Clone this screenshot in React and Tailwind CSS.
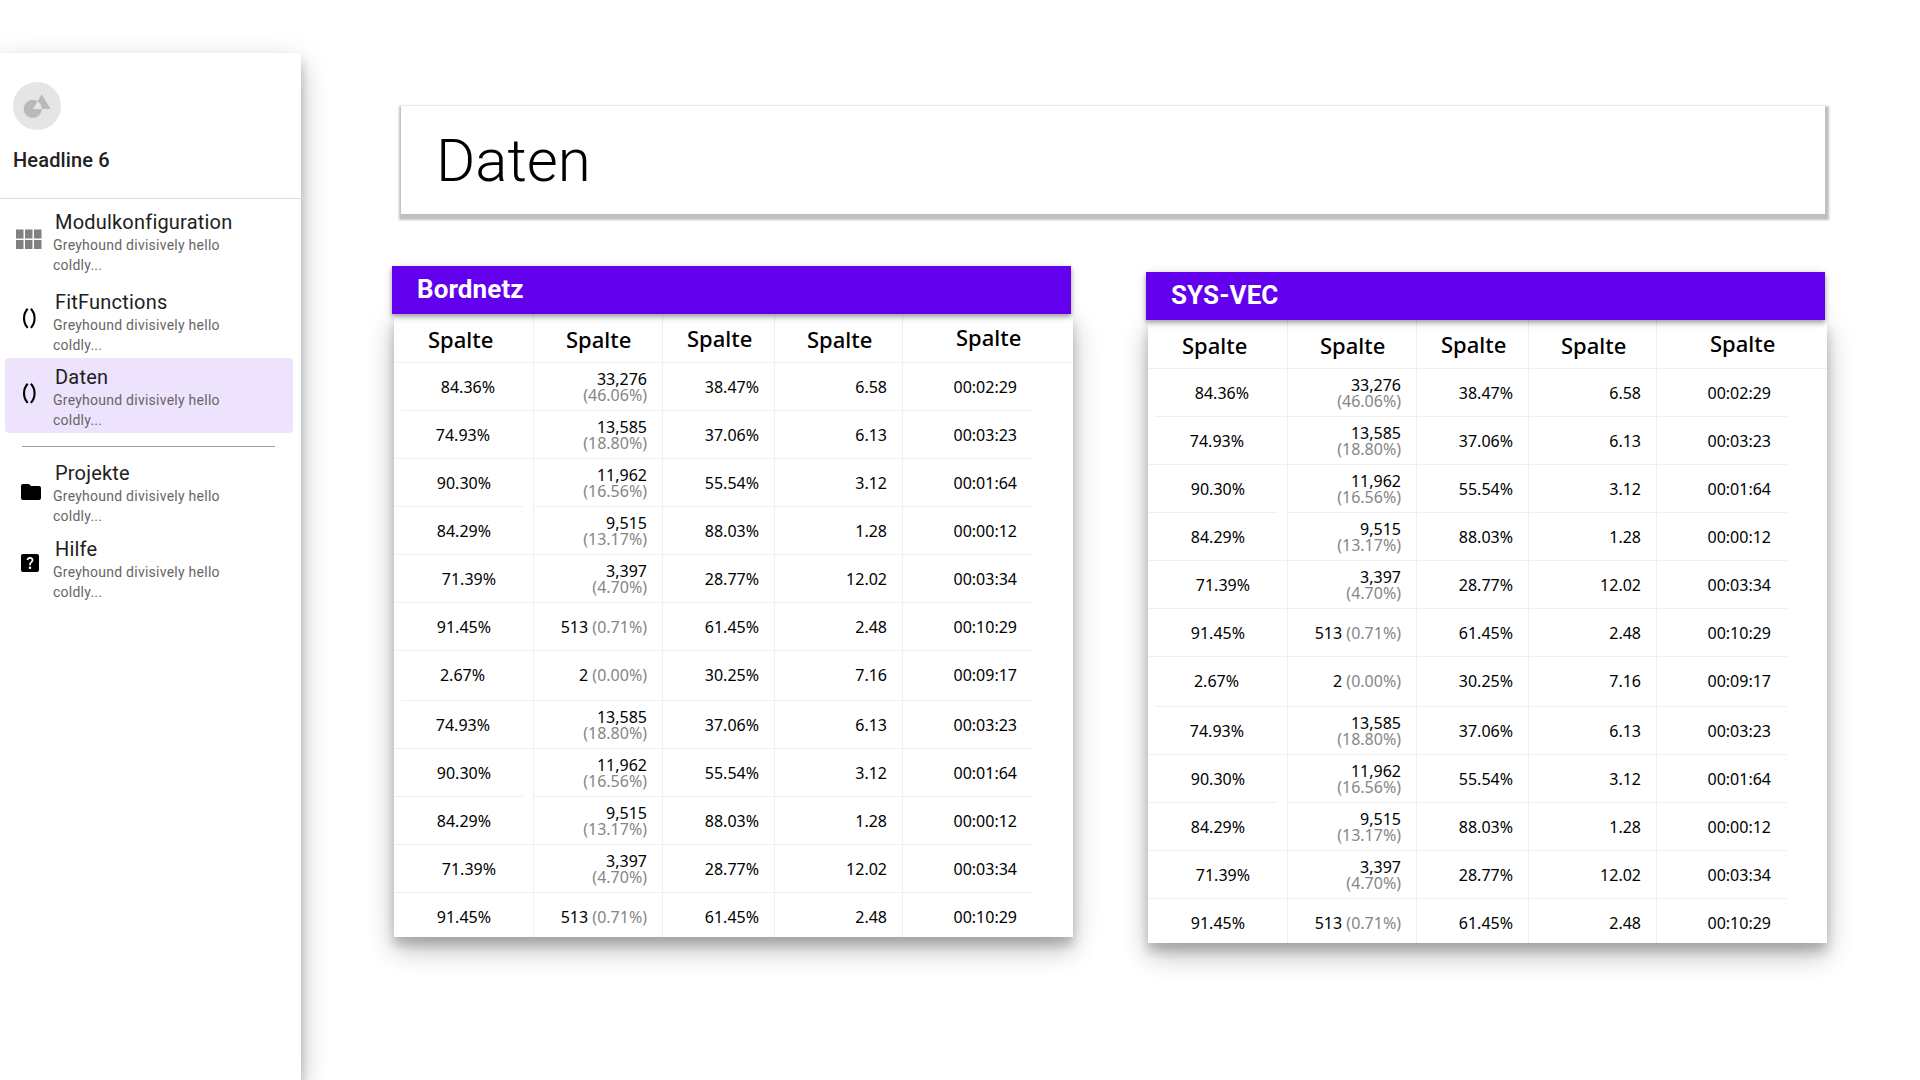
import React from "react";
import { MdFolder, MdHelpCenter } from "react-icons/md";

const ROWS = [
  ["84.36%", "33,276", "(46.06%)", "38.47%", "6.58", "00:02:29", "pr-[38px]"],
  ["74.93%", "13,585", "(18.80%)", "37.06%", "6.13", "00:03:23", "pr-[43px]"],
  ["90.30%", "11,962", "(16.56%)", "55.54%", "3.12", "00:01:64", "pr-[32px]"],
  ["84.29%", "9,515", "(13.17%)", "88.03%", "1.28", "00:00:12", "pr-[42px]"],
  ["71.39%", "3,397", "(4.70%)", "28.77%", "12.02", "00:03:34", "pr-[37px]"],
  ["91.45%", "513", "(0.71%)", "61.45%", "2.48", "00:10:29", "pr-[42px]"],
  ["2.67%", "2", "(0.00%)", "30.25%", "7.16", "00:09:17", "pr-[48px]"],
  ["74.93%", "13,585", "(18.80%)", "37.06%", "6.13", "00:03:23", "pr-[43px]"],
  ["90.30%", "11,962", "(16.56%)", "55.54%", "3.12", "00:01:64", "pr-[32px]"],
  ["84.29%", "9,515", "(13.17%)", "88.03%", "1.28", "00:00:12", "pr-[42px]"],
  ["71.39%", "3,397", "(4.70%)", "28.77%", "12.02", "00:03:34", "pr-[37px]"],
  ["91.45%", "513", "(0.71%)", "61.45%", "2.48", "00:10:29", "pr-[42px]"],
];

const HEADER_CELLS = [
  "pl-[34px] pt-[10px]",
  "pl-[32px] pt-[10px]",
  "pl-[24px] pt-[9px]",
  "pl-[32px] pt-[10px]",
  "pl-[53px] pt-[8px]",
];

const COLS = "grid grid-cols-[140px_129px_112px_128px_170px]";
const DIVIDER = "border-r border-[#f0f0f0]";
const RAISED =
  "shadow-[0_8px_10px_rgba(0,0,0,0.2),0_16px_24px_rgba(0,0,0,0.14),0_6px_30px_rgba(0,0,0,0.12)]";

function HeaderRow() {
  return (
    <div className={`${COLS} h-[49px] border-b border-[#f0f0f0]`}>
      {HEADER_CELLS.map((pad, i) => (
        <div
          key={i}
          className={`${pad} ${i < 4 ? DIVIDER : ""} text-[22px] leading-[30px] font-medium`}
        >
          Spalte
        </div>
      ))}
    </div>
  );
}

function Row({ row, index }) {
  const [load, count, share, rate, factor, time, pad] = row;
  const last = index === ROWS.length - 1;
  const height = last ? "h-[44px]" : index === 6 ? "h-[50px]" : "h-12";
  const line = last ? "" : "border-b border-[#f0f0f0]";
  const inset = index === 0 || index === 6 ? "ml-[7px]" : "";
  const outset = index === 2 || index === 8 ? "mr-[10px]" : "";
  const single = index === 5 || index === 6 || last;
  return (
    <div className={`${COLS} ${height} text-right text-base leading-[48px]`}>
      <div className={`${DIVIDER} flex min-h-0`}>
        <div className={`${line} ${inset} ${outset} ${pad} grow`}>{load}</div>
      </div>
      <div className={`${DIVIDER} ${line} min-h-0 pr-[15px]`}>
        {single ? (
          <span>
            {count} <span className="text-[#868686]">{share}</span>
          </span>
        ) : (
          <div className="pt-2 leading-4">
            <div>{count}</div>
            <div className="text-[#868686]">{share}</div>
          </div>
        )}
      </div>
      <div className={`${DIVIDER} ${line} min-h-0 pr-[15px]`}>{rate}</div>
      <div className={`${DIVIDER} ${line} min-h-0 pr-[15px]`}>{factor}</div>
      <div className={`${line} mr-10 min-h-0 pr-4`}>{time}</div>
    </div>
  );
}

function DataTable({ title }) {
  return (
    <section className="w-[681px]">
      <h2 className="relative z-10 h-12 w-[679px] bg-[#6200ee] pl-[25px] font-[Roboto,sans-serif] text-[26px] leading-[47px] font-bold tracking-[0.1px] text-white shadow-[0_2px_4px_rgba(0,0,0,0.2),0_4px_5px_rgba(0,0,0,0.14),0_1px_10px_rgba(0,0,0,0.12)]">
        {title}
      </h2>
      <div className={`${RAISED} ml-[2px] w-[679px] bg-white font-['Noto_Sans',sans-serif] text-black`}>
        <HeaderRow />
        {ROWS.map((row, i) => (
          <Row key={i} row={row} index={i} />
        ))}
      </div>
    </section>
  );
}

function ModuleIcon() {
  return (
    <svg viewBox="0 0 24 24" className="mt-[19px] ml-[5px] size-9" fill="#808080">
      <path d="M4 11h5V5H4v6zm0 7h5v-6H4v6zm6 0h5v-6h-5v6zm6 0h5v-6h-5v6zm-6-7h5V5h-5v6zm6-6v6h5V5h-5z" />
    </svg>
  );
}

function ParensIcon() {
  return (
    <svg viewBox="0 0 15 22" className="mt-[24px] ml-[17px] h-[22px] w-[15px]" fill="none" stroke="#000" strokeWidth="2.1">
      <path d="M5.7 1.7C.8 7 .8 15.6 5.7 20.9M8.9 1.7c4.9 5.3 4.9 13.9 0 19.2" />
    </svg>
  );
}

function NavItem({ icon, label, className = "" }) {
  return (
    <li className={`${className} mx-[5px] flex h-[75px] w-[288px] rounded`}>
      <div className="w-12 shrink-0">{icon}</div>
      <div className="pt-[7px]">
        <div className="pl-[2px] text-[20px] leading-[24px] tracking-[0.2px] text-[#212121]">{label}</div>
        <p className="w-[190px] pt-[1px] text-[14px] leading-[20px] tracking-[0.25px] text-[#666]">
          Greyhound divisively hello coldly...
        </p>
      </div>
    </li>
  );
}

function Sidebar() {
  return (
    <aside className={`${RAISED} mt-[53px] h-[1027px] w-[301px] shrink-0 bg-white font-[Roboto,sans-serif]`}>
      <header className="h-[146px] border-b border-[#dcdcdc] pt-[29px] pl-[13px]">
        <svg viewBox="0 0 48 48" className="size-12">
          <circle cx="24" cy="24" r="24" fill="#e5e5e5" />
          <path
            fill="#b9b9b9"
            fillRule="evenodd"
            d="M28.7 12.2 37.5 27H20ZM19.7 17.8a9.1 9.1 0 1 0 0 18.2 9.1 9.1 0 1 0 0-18.2Z"
          />
        </svg>
        <h1 className="pt-[18px] text-[20px] leading-[24px] font-medium tracking-[0.15px] text-[#212121]">
          Headline 6
        </h1>
      </header>
      <ul className="pt-1">
        <NavItem label="Modulkonfiguration" icon={<ModuleIcon />} />
        <NavItem label="FitFunctions" className="mt-[5px]" icon={<ParensIcon />} />
        <NavItem label="Daten" className="bg-[#ede3fd]" icon={<ParensIcon />} />
      </ul>
      <hr className="mt-[13px] ml-[22px] w-[253px] border-[#9e9e9e]" />
      <ul className="pt-[7px]">
        <NavItem label="Projekte" icon={<MdFolder className="mt-[26px] ml-[14px] size-6 text-black" />} />
        <NavItem
          label="Hilfe"
          className="mt-px"
          icon={<MdHelpCenter className="mt-[21px] ml-[13px] size-6 text-black" />}
        />
      </ul>
    </aside>
  );
}

export default function App() {
  return (
    <div className="flex h-[1080px] w-[1920px] overflow-hidden bg-white">
      <Sidebar />
      <main className="pt-[106px] pl-[91px]">
        <div className="ml-[9px] h-[108px] w-[1424px] bg-white pl-[35px] font-[Roboto,sans-serif] text-[60px] leading-[110px] font-light text-black shadow-[1px_3px_2px_3px_rgba(0,0,0,0.25)]">
          Daten
        </div>
        <div className="flex gap-[73px] pt-[52px]">
          <DataTable title="Bordnetz" />
          <div className="pt-[6px]">
            <DataTable title="SYS-VEC" />
          </div>
        </div>
      </main>
    </div>
  );
}
